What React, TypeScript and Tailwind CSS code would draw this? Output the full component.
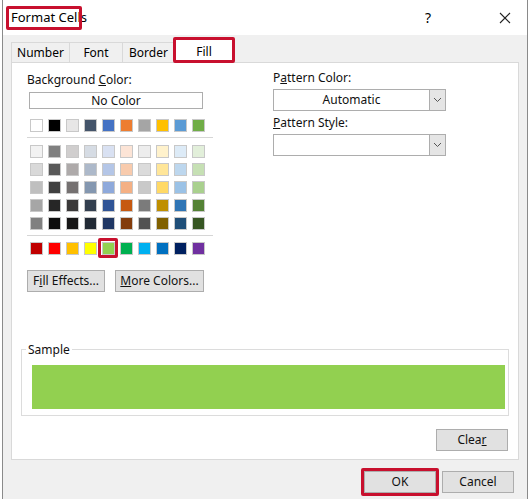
const theme = ["#ffffff", "#000000", "#e7e6e6", "#44546a", "#4472c4", "#ed7d31", "#a5a5a5", "#ffc000", "#5b9bd5", "#70ad47"];
const tints = [
  ["#f2f2f2", "#808080", "#d0cece", "#d6dce4", "#d9e1f2", "#fce4d6", "#ededed", "#fff2cc", "#ddebf7", "#e2efda"],
  ["#d9d9d9", "#595959", "#aeaaaa", "#adb9ca", "#b4c6e7", "#f8cbad", "#dbdbdb", "#ffe699", "#bdd7ee", "#c6e0b4"],
  ["#bfbfbf", "#404040", "#757171", "#8497b0", "#8ea9db", "#f4b084", "#c9c9c9", "#ffd966", "#9bc2e6", "#a9d08e"],
  ["#a6a6a6", "#262626", "#3a3838", "#333f4f", "#305496", "#c65911", "#7b7b7b", "#bf8f00", "#2f75b5", "#548235"],
  ["#808080", "#0d0d0d", "#171616", "#222a35", "#203764", "#833c0c", "#525252", "#806000", "#1f4e78", "#375623"],
];
const standard = ["#c00000", "#ff0000", "#ffc000", "#ffff00", "#92d050", "#00b050", "#00b0f0", "#0070c0", "#002060", "#7030a0"];

function Swatch({ c, sel }: { c: string; sel?: boolean }) {
  return (
    <div className={"relative w-[18px] h-[18px] flex items-center justify-center"}>
      <div className="w-[13px] h-[13px] border border-[#c8c8c8]" style={{ background: c }} />
      {sel && <div className="absolute inset-[-1px] border-[3px] border-[#c8102e] rounded-[2px]" />}
    </div>
  );
}

function Row({ colors, sel }: { colors: string[]; sel?: number }) {
  return (
    <div className="flex">
      {colors.map((c, i) => (
        <Swatch key={i} c={c} sel={i === sel} />
      ))}
    </div>
  );
}

function Btn({ children, w, cls = "" }: { children: React.ReactNode; w: string; cls?: string }) {
  return (
    <div className={`${w} h-[22px] bg-[#e1e1e1] border border-[#adadad] flex items-center justify-center text-[12px] text-[#111] ${cls}`}>
      {children}
    </div>
  );
}

function Select({ value }: { value: string }) {
  return (
    <div className="w-[173px] h-[22px] bg-white border border-[#adadad] flex text-[12px]">
      <div className="flex-1 flex items-center justify-center">{value}</div>
      <div className="w-[16px] bg-[#e5e5e5] border-l border-[#adadad] flex items-center justify-center">
        <svg width="9" height="6" viewBox="0 0 9 6"><path d="M1 1l3.5 3.5L8 1" fill="none" stroke="#555" strokeWidth="1" /></svg>
      </div>
    </div>
  );
}

export default function App() {
  return (
    <div className="w-[531px] h-[499px] bg-white overflow-hidden" style={{ fontFamily: '"Segoe UI", "Noto Sans", sans-serif' }}>
      <div className="ml-[2px] w-[526px] h-[499px] border-x border-[#8a8a8a] bg-[#f0f0f0] flex flex-col">
        <div className="h-[35px] bg-white flex items-center relative">
          <span className="ml-[8px] text-[13px] text-black">Format Cells</span>
          <div className="absolute left-[3px] top-[6px] w-[76px] h-[24px] border-[3px] border-[#c8102e] rounded-[2px]" />
          <span className="ml-auto mr-[68px] text-[14px]">?</span>
          <svg className="mr-[16px]" width="12" height="12" viewBox="0 0 12 12"><path d="M1 1l10 10M11 1L1 11" stroke="#222" strokeWidth="1.1" /></svg>
        </div>
        <div className="flex mt-[7px] ml-[8px] h-[20px] items-end text-[12px]">
          <div className="w-[58px] h-[20px] flex items-center justify-center border-t border-l border-[#d9d9d9] bg-[#f0f0f0]">Number</div>
          <div className="w-[53px] h-[20px] flex items-center justify-center border-t border-l border-[#d9d9d9]">Font</div>
          <div className="w-[52px] h-[20px] flex items-center justify-center border-t border-l border-[#d9d9d9]">Border</div>
          <div className="relative w-[60px] h-[24px] mb-[-1px] bg-white border-x border-t border-[#d9d9d9] flex items-center justify-center z-10">
            Fill
            <div className="absolute left-[-2px] top-[-3px] w-[62px] h-[26px] border-[3px] border-[#c8102e] rounded-[2px]" />
          </div>
        </div>
        <div className="mx-[8px] h-[398px] bg-white border border-[#d9d9d9] flex flex-col text-[12px] text-[#111]">
          <div className="flex">
            <div className="w-[261px] pl-[15px] pt-[8px]">
              <div>Background <u>C</u>olor:</div>
              <div className="mt-[3px] ml-[2px] w-[174px] h-[17px] border border-[#adadad] flex items-center justify-center">No Color</div>
              <div className="mt-[7px]"><Row colors={theme} /></div>
              <div className="mt-[3px] w-[186px] border-t border-[#d6d6d6]" />
              <div className="mt-[4px] flex flex-col">
                {tints.map((r, i) => <Row key={i} colors={r} />)}
              </div>
              <div className="mt-[3px] w-[186px] border-t border-[#d6d6d6]" />
              <div className="mt-[3px]"><Row colors={standard} sel={4} /></div>
              <div className="mt-[13px] flex gap-[10px]">
                <Btn w="w-[78px]">F<u>i</u>ll Effects...</Btn>
                <Btn w="w-[89px]"><u>M</u>ore Colors...</Btn>
              </div>
            </div>
            <div className="pt-[6px]">
              <div>P<u>a</u>ttern Color:</div>
              <div className="mt-[2px]"><Select value="Automatic" /></div>
              <div className="mt-[3px]"><u>P</u>attern Style:</div>
              <div className="mt-[2px]"><Select value="" /></div>
            </div>
          </div>
          <div className="relative mt-[57px] ml-[9px] w-[488px] h-[67px] border border-[#dcdcdc] pt-[15px] pl-[10px]">
            <span className="absolute left-[4px] top-[-9px] bg-white px-[2px]">Sample</span>
            <div className="w-[473px] h-[44px] bg-[#92d050]" />
          </div>
          <div className="mt-[13px] ml-[424px]"><Btn w="w-[72px]">Clea<u>r</u></Btn></div>
        </div>
        <div className="flex mt-[11px] ml-[361px] gap-[6px]">
          <div className="relative">
            <Btn w="w-[72px]" cls="border-[#0078d7]">OK</Btn>
            <div className="absolute left-[-3px] top-[-3px] w-[78px] h-[28px] border-[3px] border-[#c8102e] rounded-[2px]" />
          </div>
          <Btn w="w-[72px]">Cancel</Btn>
        </div>
      </div>
    </div>
  );
}
